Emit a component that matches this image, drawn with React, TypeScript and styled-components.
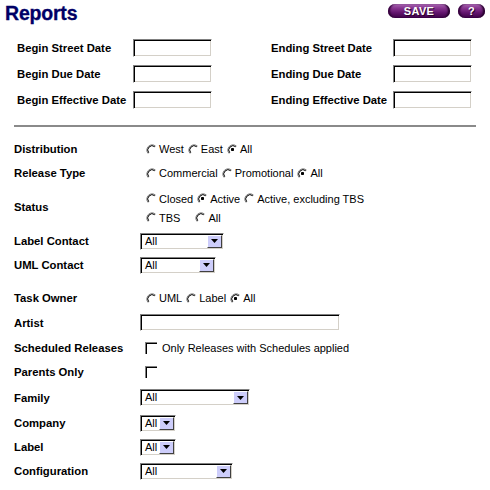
import React from "react";
import styled, { createGlobalStyle } from "styled-components";

const GlobalStyle = createGlobalStyle`
  html, body { margin: 0; padding: 0; background: #ffffff; }
  body { font-family: "Liberation Sans", Arial, sans-serif; color: #000; }
  * { box-sizing: border-box; }
`;

const Page = styled.div`
  width: 490px;
  height: 490px;
  overflow: hidden;
`;

const Header = styled.div`
  display: flex;
  justify-content: space-between;
  align-items: flex-start;
  padding: 1px 5px 0 5px;
  height: 26px;
`;

const Title = styled.h1`
  margin: 0;
  font-size: 19.5px;
  line-height: 24px;
  font-weight: bold;
  color: #000066;
  font-family: "Liberation Sans", Arial, sans-serif;
  letter-spacing: -0.2px;
  -webkit-text-stroke: 0.3px #000066;
`;

const ButtonGroup = styled.div`
  display: flex;
  gap: 8px;
  margin-top: 3px;
`;

const PillButton = styled.button<{ $w: number }>`
  width: ${(p) => p.$w}px;
  height: 14px;
  padding: 0;
  border: none;
  border-radius: 7px;
  background: linear-gradient(to bottom, #a866b0 0%, #86358f 30%, #651670 60%, #3c0046 100%);
  box-shadow: inset 3px 0 2px -1px #300038, inset -3px 0 2px -1px #24002a;
  color: #ffffff;
  font-family: "Liberation Sans", Arial, sans-serif;
  font-weight: bold;
  font-size: 11px;
  line-height: 14px;
  letter-spacing: 0.3px;
  text-shadow: 1px 1px 0 #2a002a;
  cursor: pointer;
`;

const DateGrid = styled.div`
  display: grid;
  grid-template-columns: 116px 79px 59px 122px 79px;
  grid-auto-rows: 26px;
  align-items: center;
  margin-top: 9px;
  padding-left: 17px;
`;

const Label = styled.label`
  font-family: "Liberation Sans", Arial, sans-serif;
  font-weight: bold;
  font-size: 11.3px;
  white-space: nowrap;
`;

const TextBox = styled.input<{ $w: number; $h: number }>`
  width: ${(p) => p.$w}px;
  height: ${(p) => p.$h}px;
  margin: 0;
  padding: 0 2px;
  border-style: solid;
  border-width: 1px;
  border-color: #808080 #ffffff #ffffff #808080;
  box-shadow: inset 1px 1px 0 #000000, inset -1px -1px 0 #d4d0c8;
  background: #ffffff;
  font-family: "Liberation Sans", Arial, sans-serif;
  font-size: 11px;
  outline: none;
`;

const Divider = styled.hr`
  margin: 12px 14px 0 14px;
  height: 2px;
  border: none;
  background: #8a8a8a;
`;

const Form = styled.div`
  margin-top: 10px;
  padding-left: 14px;
`;

const FieldRow = styled.div<{ $h: number; $mt?: number }>`
  display: grid;
  grid-template-columns: 126px 1fr;
  align-items: center;
  height: ${(p) => p.$h}px;
  margin-top: ${(p) => p.$mt ?? 0}px;
`;

const Control = styled.div`
  display: flex;
  align-items: center;
`;

const RadioStack = styled.div`
  display: flex;
  flex-direction: column;
  padding-top: 4px;
  align-self: start;
`;

const RadioLine = styled.div`
  display: flex;
  align-items: center;
  height: 19px;
  padding-left: 5px;
  gap: 3px;
`;

const RadioItem = styled.span<{ $ml?: number }>`
  display: inline-flex;
  align-items: center;
  font-family: "Liberation Sans", Arial, sans-serif;
  font-size: 11px;
  margin-left: ${(p) => p.$ml ?? 0}px;
  white-space: nowrap;
`;

const RadioSvg = styled.svg`
  display: block;
  margin-right: 1px;
  flex: none;
`;

const CheckMark = styled.span`
  display: inline-block;
  width: 12px;
  height: 12px;
  border-top: 1px solid #808080;
  border-left: 1px solid #808080;
  box-shadow: inset 1px 1px 0 #000000;
  margin-left: 5px;
  flex: none;
`;

const CheckText = styled.span`
  font-family: "Liberation Sans", Arial, sans-serif;
  font-size: 11px;
  margin-left: 5px;
`;

const SelectBox = styled.div<{ $w: number }>`
  width: ${(p) => p.$w}px;
  height: 17px;
  display: flex;
  align-items: stretch;
  border-style: solid;
  border-width: 1px;
  border-color: #808080 #ffffff #ffffff #808080;
  box-shadow: inset 1px 1px 0 #000000, inset -1px -1px 0 #d4d0c8;
  padding: 1px;
  background: #ffffff;
`;

const SelectValue = styled.span`
  flex: 1;
  font-family: "Liberation Sans", Arial, sans-serif;
  font-size: 11px;
  line-height: 13px;
  padding-left: 3px;
`;

const SelectArrow = styled.span`
  width: 15px;
  flex: none;
  display: flex;
  align-items: center;
  justify-content: center;
  background: #cdcdfa;
  border-style: solid;
  border-width: 1px;
  border-color: #ffffff #404040 #404040 #ffffff;
`;

const RadioIcon = ({ checked }: { checked?: boolean }) => {
  const cx = 6.5;
  const cy = 6.5;
  const arc = (r: number) => {
    const a1 = (40 * Math.PI) / 180;
    const a2 = (230 * Math.PI) / 180;
    const x1 = cx + r * Math.cos(a1);
    const y1 = cy - r * Math.sin(a1);
    const x2 = cx + r * Math.cos(a2);
    const y2 = cy - r * Math.sin(a2);
    return `M ${x1.toFixed(2)} ${y1.toFixed(2)} A ${r} ${r} 0 0 0 ${x2.toFixed(2)} ${y2.toFixed(2)}`;
  };
  return (
    <RadioSvg width="13" height="13" viewBox="0 0 13 13">
      <path d={arc(5.3)} fill="none" stroke="#808080" strokeWidth="1" />
      <path d={arc(4.3)} fill="none" stroke="#000000" strokeWidth="1" />
      {checked && <rect x={cx - 1.5} y={cy - 1.5} width="3" height="3" rx="0.8" fill="#000" />}
    </RadioSvg>
  );
};

const Radio = ({ label, checked, ml }: { label: string; checked?: boolean; ml?: number }) => (
  <RadioItem $ml={ml}>
    <RadioIcon checked={checked} />
    {label}
  </RadioItem>
);

const ArrowIcon = () => (
  <svg width="7" height="4" viewBox="0 0 7 4">
    <path d="M0 0 H7 L3.5 4 Z" fill="#000" />
  </svg>
);

const Select = ({ w }: { w: number }) => (
  <SelectBox $w={w}>
    <SelectValue>All</SelectValue>
    <SelectArrow>
      <ArrowIcon />
    </SelectArrow>
  </SelectBox>
);

export default function App() {
  return (
    <Page>
      <GlobalStyle />
      <Header>
        <Title>Reports</Title>
        <ButtonGroup>
          <PillButton $w={62}>SAVE</PillButton>
          <PillButton $w={27}>?</PillButton>
        </ButtonGroup>
      </Header>

      <DateGrid>
        <Label>Begin Street Date</Label>
        <TextBox $w={79} $h={18} type="text" />
        <span />
        <Label>Ending Street Date</Label>
        <TextBox $w={79} $h={18} type="text" />

        <Label>Begin Due Date</Label>
        <TextBox $w={79} $h={18} type="text" />
        <span />
        <Label>Ending Due Date</Label>
        <TextBox $w={79} $h={18} type="text" />

        <Label>Begin Effective Date</Label>
        <TextBox $w={79} $h={18} type="text" />
        <span />
        <Label>Ending Effective Date</Label>
        <TextBox $w={79} $h={18} type="text" />
      </DateGrid>

      <Divider />

      <Form>
        <FieldRow $h={24}>
          <Label>Distribution</Label>
          <RadioLine>
            <Radio label="West" />
            <Radio label="East" />
            <Radio label="All" checked />
          </RadioLine>
        </FieldRow>
        <FieldRow $h={24}>
          <Label>Release Type</Label>
          <RadioLine>
            <Radio label="Commercial" />
            <Radio label="Promotional" />
            <Radio label="All" checked />
          </RadioLine>
        </FieldRow>
        <FieldRow $h={44}>
          <Label>Status</Label>
          <RadioStack>
            <RadioLine>
              <Radio label="Closed" />
              <Radio label="Active" checked />
              <Radio label="Active, excluding TBS" />
            </RadioLine>
            <RadioLine>
              <Radio label="TBS" />
              <Radio label="All" ml={11} />
            </RadioLine>
          </RadioStack>
        </FieldRow>
        <FieldRow $h={24}>
          <Label>Label Contact</Label>
          <Control>
            <Select w={84} />
          </Control>
        </FieldRow>
        <FieldRow $h={24}>
          <Label>UML Contact</Label>
          <Control>
            <Select w={76} />
          </Control>
        </FieldRow>
        <FieldRow $h={24} $mt={9}>
          <Label>Task Owner</Label>
          <RadioLine>
            <Radio label="UML" />
            <Radio label="Label" />
            <Radio label="All" checked />
          </RadioLine>
        </FieldRow>
        <FieldRow $h={25}>
          <Label>Artist</Label>
          <Control>
            <TextBox $w={200} $h={17} type="text" />
          </Control>
        </FieldRow>
        <FieldRow $h={25}>
          <Label>Scheduled Releases</Label>
          <Control>
            <CheckMark />
            <CheckText>Only Releases with Schedules applied</CheckText>
          </Control>
        </FieldRow>
        <FieldRow $h={24}>
          <Label>Parents Only</Label>
          <Control>
            <CheckMark />
          </Control>
        </FieldRow>
        <FieldRow $h={27}>
          <Label>Family</Label>
          <Control>
            <Select w={110} />
          </Control>
        </FieldRow>
        <FieldRow $h={24}>
          <Label>Company</Label>
          <Control>
            <Select w={36} />
          </Control>
        </FieldRow>
        <FieldRow $h={24}>
          <Label>Label</Label>
          <Control>
            <Select w={36} />
          </Control>
        </FieldRow>
        <FieldRow $h={24}>
          <Label>Configuration</Label>
          <Control>
            <Select w={93} />
          </Control>
        </FieldRow>
      </Form>
    </Page>
  );
}
